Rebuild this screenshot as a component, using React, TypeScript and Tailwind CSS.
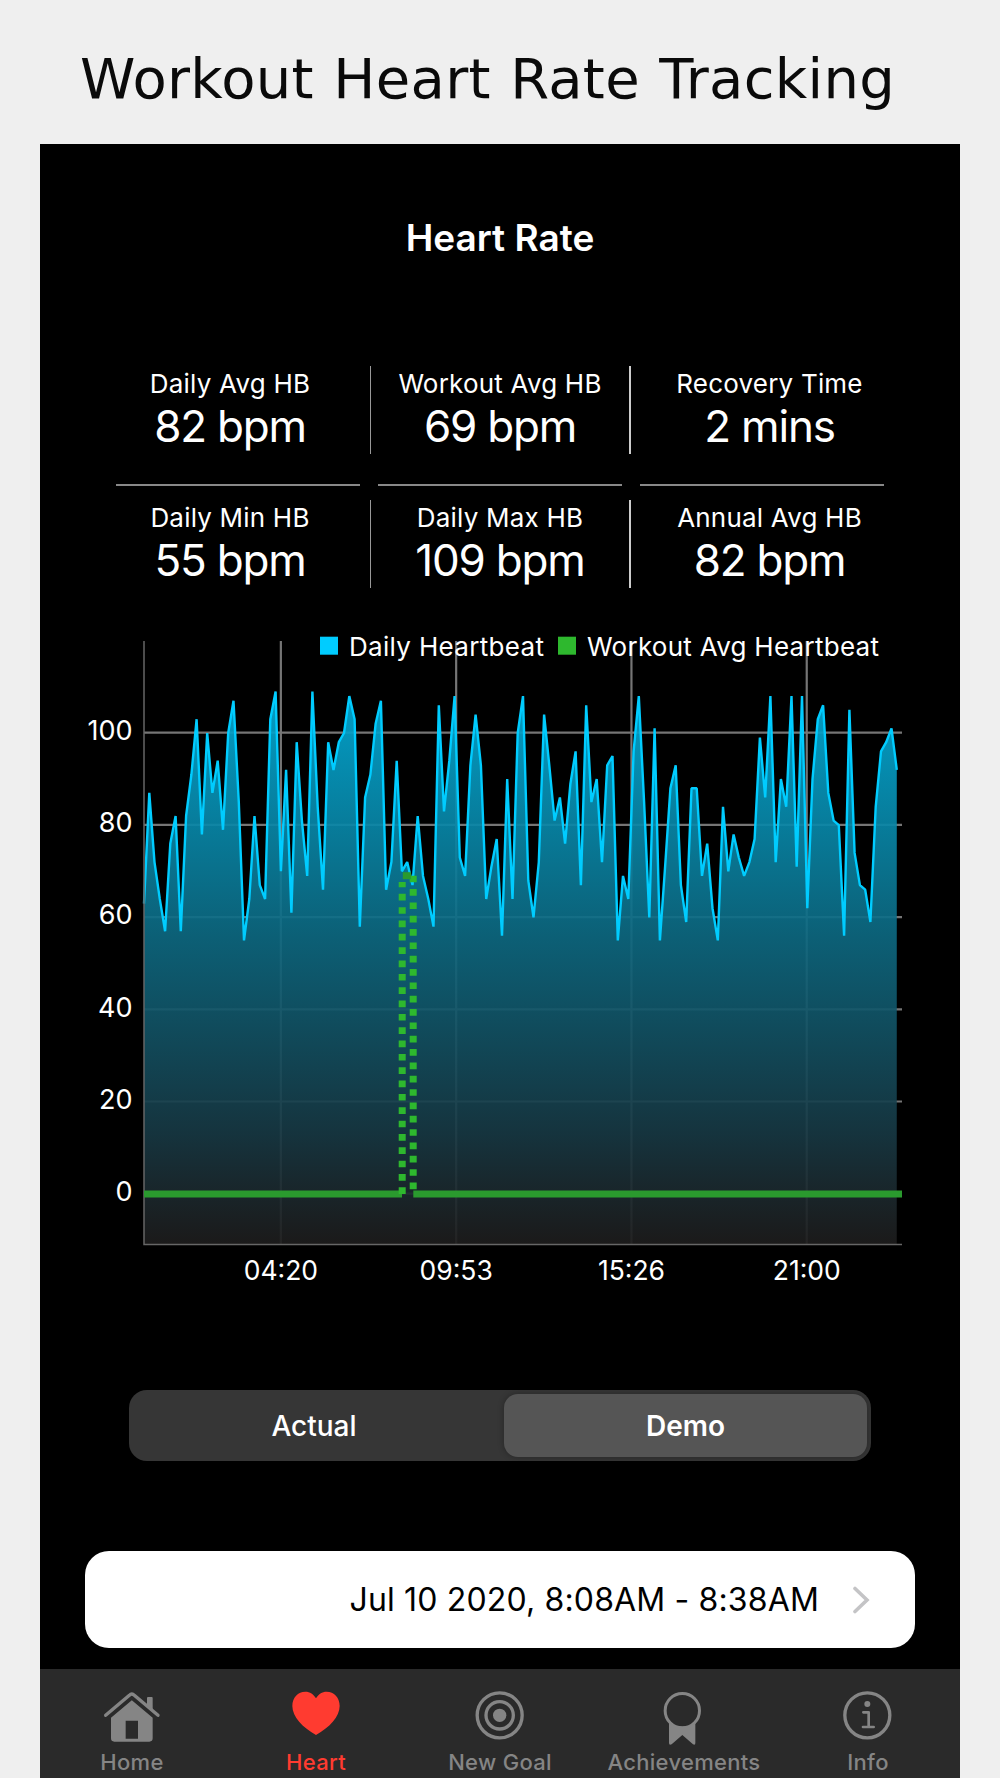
import { FC, ReactNode } from 'react';

const stats = [
    [
        { title: 'Daily Avg HB', value: '82 bpm' },
        { title: 'Workout Avg HB', value: '69 bpm' },
        { title: 'Recovery Time', value: '2 mins' },
    ],
    [
        { title: 'Daily Min HB', value: '55 bpm' },
        { title: 'Daily Max HB', value: '109 bpm' },
        { title: 'Annual Avg HB', value: '82 bpm' },
    ],
];

// one reading every 10 minutes
const heartbeats = [
    63, 87, 72, 64, 57, 76, 82, 57, 82, 91, 103, 78, 100, 87, 94, 79, 100, 107, 85, 55, 64, 82, 67,
    64, 103, 109, 70, 92, 61, 98, 81, 69, 109, 84, 66, 98, 92, 98, 100, 108, 103, 58, 86, 91, 102,
    107, 66, 72, 94, 70, 72, 67, 82, 69, 64, 58, 106, 83, 94, 108, 73, 69, 93, 104, 93, 64, 71, 77,
    56, 90, 64, 100, 108, 68, 60, 72, 104, 93, 81, 86, 76, 89, 96, 67, 106, 85, 90, 72, 93, 95, 55,
    69, 64, 96, 108, 85, 60, 101, 55, 71, 88, 93, 67, 59, 88, 88, 69, 76, 62, 55, 84, 70, 78, 73,
    69, 72, 77, 99, 86, 108, 72, 90, 84, 108, 71, 108, 62, 90, 103, 106, 87, 81, 80, 56, 105, 74,
    67, 66, 59, 84, 96, 98, 101, 92,
];

const LEFT = 104;
const RIGHT = 862;
const TOP = 21;
const BOTTOM = 624.5;
const xAt = (i: number) => LEFT + i * 5.264;
const yAt = (v: number) => 574 - v * 4.61;

const line = heartbeats.map((v, i) => `${xAt(i).toFixed(1)},${yAt(v).toFixed(1)}`).join(' ');
const area = `${LEFT},${BOTTOM} ${line} ${xAt(143)},${BOTTOM}`;

const times = [
    { label: '04:20', index: 26 },
    { label: '09:53', index: 59.3 },
    { label: '15:26', index: 92.6 },
    { label: '21:00', index: 125.9 },
];

const Chart: FC = () => (
    <svg width="920" height="690" viewBox="0 0 920 690" className="block font-[Inter,sans-serif]">
        <defs>
            <linearGradient id="fill" gradientUnits="userSpaceOnUse" x1="0" y1="70" x2="0" y2="624">
                <stop offset="0" stopColor="#02acd8" />
                <stop offset="0.45" stopColor="#0d677f" />
                <stop offset="0.8" stopColor="#173843" />
                <stop offset="0.91" stopColor="#1b282d" />
                <stop offset="1" stopColor="#1d1c1c" />
            </linearGradient>
        </defs>
        <g stroke="#757575" strokeWidth="2.2">
            {[0, 20, 40, 60, 80, 100].map((v) => (
                <line key={v} x1={LEFT} x2={RIGHT} y1={yAt(v) - 0.3} y2={yAt(v) - 0.3} />
            ))}
            {times.map((t) => (
                <line key={t.label} x1={xAt(t.index)} x2={xAt(t.index)} y1={TOP} y2={BOTTOM} />
            ))}
        </g>
        <polygon points={area} fill="url(#fill)" fillOpacity="0.92" />
        <polyline points={line} fill="none" stroke="#00ccff" strokeWidth="2.4" strokeLinejoin="bevel" />
        <path d={`M${LEFT} ${TOP}V${BOTTOM}H${RIGHT}`} fill="none" stroke="#666" strokeWidth="1.5" />

        {/* workout average */}
        <g stroke="#2eb82e" strokeWidth="7" fill="none">
            <path d="M104 574H362M373.3 574H862" stroke="#2a9a2e" />
            <path d="M362.2 574V262" strokeDasharray="6.67 6.67" />
            <path d="M373.2 255.7V570" strokeDasharray="6.67 6.67" />
            <path d="M362.8 255.7H371" stroke="#2a9a2e" />
        </g>

        <rect x="280" y="16.700" width="18" height="18" fill="#00ccff" />
        <rect x="518" y="16.700" width="18" height="18" fill="#2eb82e" />
        <g fill="#fff" fontSize="26">
            <text x="309" y="35.5" textLength="195" lengthAdjust="spacing">
                Daily Heartbeat
            </text>
            <text x="547" y="35.5" textLength="292" lengthAdjust="spacing">
                Workout Avg Heartbeat
            </text>
            {[0, 20, 40, 60, 80, 100].map((v) => (
                <text key={v} x="92.5" y={yAt(v) + 7} textAnchor="end" fontSize="27">
                    {v}
                </text>
            ))}
            {times.map((t) => (
                <text key={t.label} x={xAt(t.index)} y="659.5" textAnchor="middle" fontSize="26.5">
                    {t.label}
                </text>
            ))}
        </g>
    </svg>
);

const TabIcon: FC<{ children: ReactNode }> = ({ children }) => (
    <svg width="60" height="58" viewBox="-90 57 180 174" fill="none" stroke="currentColor">
        {children}
    </svg>
);

const tabs = [
    {
        title: 'Home',
        icon: (
            <TabIcon>
                <g transform="translate(-156 0)">
                    <path
                        d="M155.500 91 218 143V205q0 10-10 10H103q-10 0-10-10V143ZM137 152V206H174V152Z"
                        fill="currentColor"
                        fillRule="evenodd"
                        stroke="none"
                    />
                    <path d="M201 84q0-3 3-3H215q3 0 3 3V120L201 106Z" fill="currentColor" stroke="none" />
                    <path d="M77 136 148 76Q155.500 68 163 76L234 136" strokeWidth="10" strokeLinecap="round" />
                </g>
            </TabIcon>
        ),
    },
    {
        title: 'Heart',
        active: true,
        icon: (
            <TabIcon>
                <path
                    d="M0 195C-40 173-71 140-71 108C-71 82-54 65-32 65C-18 65-7 73 0 85C7 73 18 65 32 65C54 65 71 82 71 108C71 140 40 173 0 195Z"
                    fill="currentColor"
                    stroke="none"
                />
            </TabIcon>
        ),
    },
    {
        title: 'New Goal',
        icon: (
            <TabIcon>
                <circle cx="-1" cy="136" r="67.500" strokeWidth="10" />
                <circle cx="-1" cy="136" r="41" strokeWidth="10" />
                <circle cx="-1" cy="136" r="20" fill="currentColor" stroke="none" />
            </TabIcon>
        ),
    },
    {
        title: 'Achievements',
        icon: (
            <TabIcon>
                <circle cx="-5" cy="122" r="51.500" strokeWidth="9" />
                <path
                    d="M-45 158Q-5 182 34 158V219Q34 227 27 223L-5 195L-37 223Q-45 227-45 219Z"
                    fill="currentColor"
                    stroke="none"
                />
            </TabIcon>
        ),
    },
    {
        title: 'Info',
        icon: (
            <TabIcon>
                <circle cx="-2" cy="136" r="67.500" strokeWidth="10" />
                <circle cx="-2" cy="102" r="9" fill="currentColor" stroke="none" />
                <path d="M-14 127H2V171M-15 171H17" strokeWidth="8" strokeLinecap="round" strokeLinejoin="round" />
            </TabIcon>
        ),
    },
];

const StatRow: FC<{ items: { title: string; value: string }[] }> = ({ items }) => (
    <div className="-ml-px flex h-[88px]">
        {items.map((item, i) => (
            <div key={item.title} className="flex">
                {i > 0 && (
                    <div className={i === 1 ? 'w-px bg-[#999]' : 'w-[1.500px] bg-[#ccc]'} />
                )}
                <div
                    className={`flex flex-col items-center whitespace-nowrap ${
                        i === 0 ? 'w-[255px] pr-[25px]' : i === 1 ? 'w-[258px]' : 'w-[278px]'
                    }`}
                >
                    <span className="mt-[2px] text-[26px] leading-8 tracking-[0.2px]">{item.title}</span>
                    <span className="mt-[3px] text-[44px] leading-[46px] tracking-[-1.2px]">{item.value}</span>
                </div>
            </div>
        ))}
    </div>
);

const App: FC = () => (
    <div className="flex h-[1778px] w-[1000px] flex-col overflow-hidden bg-[#efefef]">
        <h1 className="h-36 pt-[44px] pl-[80px] font-['DejaVu_Sans',sans-serif] text-[56px] leading-[70px] tracking-[0.33px] whitespace-nowrap text-[#0a0a0a] [word-spacing:1.3px]">
            Workout Heart Rate Tracking
        </h1>
        <main className="mx-10 flex flex-1 flex-col bg-black font-[Inter,sans-serif] text-white">
            <h2 className="mt-[70px] text-center text-[37px] leading-[48px] font-semibold">Heart Rate</h2>

            <section className="mt-[104px] ml-[76px] flex w-[768px] flex-col">
                <StatRow items={stats[0]} />
                <div className="mt-[30px] mb-[14px] flex h-[2px] gap-[18px]">
                    <div className="w-[244px] bg-[#888]" />
                    <div className="w-[244px] bg-[#888]" />
                    <div className="w-[244px] bg-[#888]" />
                </div>
                <StatRow items={stats[1]} />
            </section>

            <div className="mt-[32px] h-[690px]">
                <Chart />
            </div>

            <div className="mt-[80px] ml-[89px] flex h-[71px] w-[742px] shrink-0 rounded-[18px] bg-[#363636] p-1 text-[28px] font-medium">
                <button type="button" className="w-[371px] pr-[9px]">
                    Actual
                </button>
                <button
                    type="button"
                    className="flex-1 rounded-[14px] bg-[#555] font-semibold shadow-[0_0_6px_rgba(0,0,0,0.3)]"
                >
                    Demo
                </button>
            </div>

            <div className="mx-[45px] mt-[90px] flex h-[97px] shrink-0 items-center justify-end rounded-[24px] bg-white pr-[45px] text-[32px] tracking-[0.15px] text-black">
                <span>Jul 10 2020, 8:08AM - 8:38AM</span>
                <svg width="18" height="28" viewBox="0 0 18 28" className="ml-[33px]" fill="none">
                    <path d="M3 2.500 15 14 3 25.500" stroke="#c4c4c6" strokeWidth="3.600" strokeLinecap="round" />
                </svg>
            </div>

            <nav className="mt-[21px] grid h-[109px] shrink-0 grid-cols-5 bg-[#2a2a2a]">
                {tabs.map((tab) => (
                    <div
                        key={tab.title}
                        className={`flex flex-col items-center pt-5 ${
                            tab.active ? 'text-[#ff3b30]' : 'text-[#858585]'
                        }`}
                    >
                        {tab.icon}
                        <span className="mt-[2px] text-[22px] leading-[26px] font-medium tracking-[0.3px]">
                            {tab.title}
                        </span>
                    </div>
                ))}
            </nav>
        </main>
    </div>
);
export default App;
